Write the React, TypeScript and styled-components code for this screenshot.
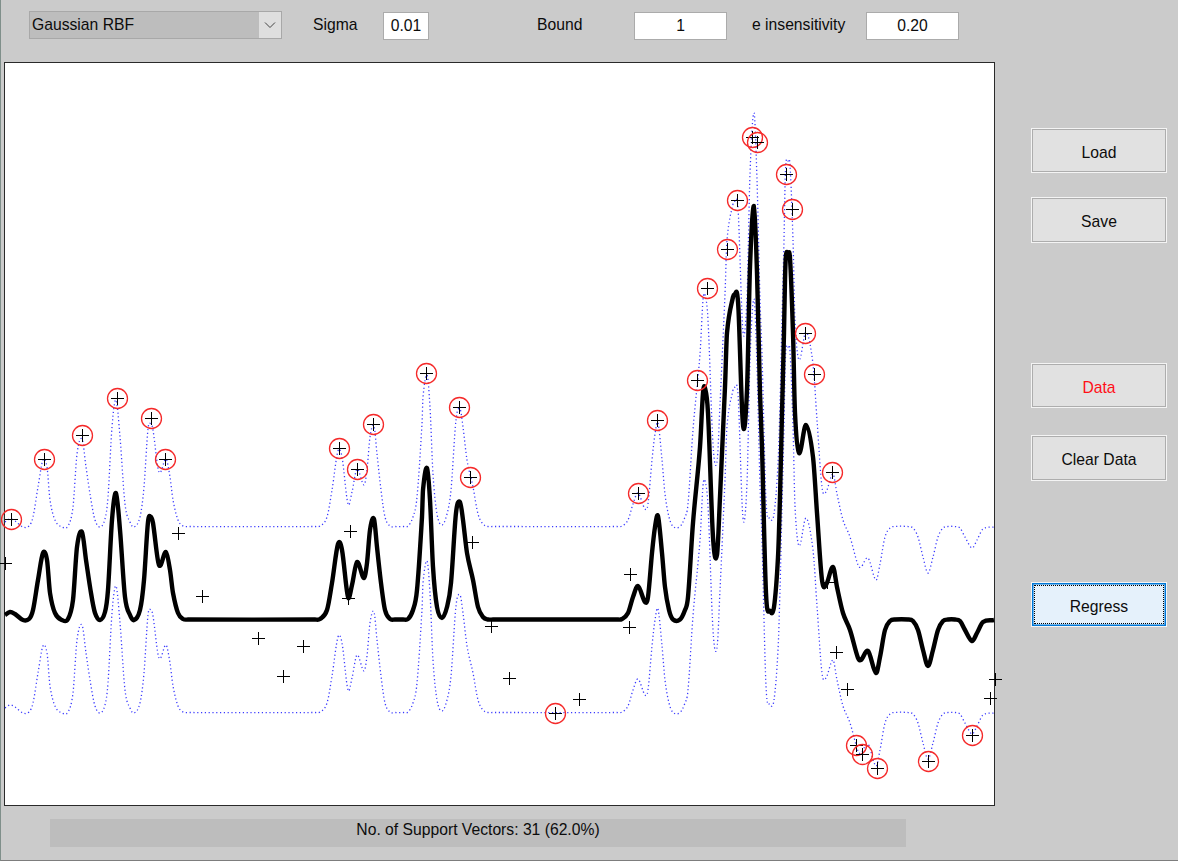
import React from 'react';

import styled, {createGlobalStyle} from 'styled-components';

const GlobalStyle = createGlobalStyle`
    html, body {
        margin: 0;
        padding: 0;
        background: #cbcbcb;
        overflow: hidden;
    }
`;

// all chart data is in page pixels, the svg viewBox below lines up with them
const CURVE: [number, number][] = [
    [5, 615], [10, 612], [15, 614], [23, 620], [29, 619], [33, 610], [38, 580], [43, 553], [47, 560], [50, 593],
    [55, 613], [62, 620], [68, 619], [73, 600], [77, 547], [82, 532], [86, 560], [91, 593], [95, 613], [100, 620],
    [105, 612], [108, 590], [112, 520], [116, 493], [120, 530], [125, 597], [130, 615], [134, 620], [140, 610],
    [144, 580], [148, 522], [151, 517], [153, 523], [159, 565], [166, 552], [170, 570], [173, 593], [178, 613],
    [183, 619], [188, 619.5], [315, 619.5], [320, 619], [327, 610], [332, 583], [338, 544], [342, 550], [348, 597],
    [352, 585], [357, 562], [364, 578], [367, 563], [370, 530], [374, 519], [377, 547], [381, 583], [385, 610],
    [390, 619], [395, 619.5], [403, 619.5], [408, 619], [413, 610], [417, 590], [422, 517], [423, 490], [427, 468],
    [430, 500], [433, 567], [437, 607], [442, 618], [447, 607], [451, 583], [456, 513], [460, 502], [463, 520],
    [467, 553], [473, 580], [478, 607], [483, 617], [488, 619.5], [493, 619.5], [617, 619.5], [622, 619], [628, 613],
    [633, 597], [638, 586], [645, 602], [648, 597], [652, 553], [655, 527], [658, 516], [662, 553], [665, 587],
    [669, 610], [673, 619.5], [680, 619.5], [685, 610], [688, 597], [693, 523], [700, 447], [703, 393], [705, 388],
    [708, 413], [713, 537], [717, 555], [720, 497], [725, 387], [727, 333], [733, 297], [735, 294], [737, 293],
    [738.5, 310], [743, 425], [747, 390], [750, 267], [754, 206], [757, 273], [760, 393], [762, 447], [766, 593],
    [770, 611], [774, 607], [778, 557], [780, 497], [782, 413], [784, 333], [785, 280], [786, 255], [788, 254],
    [790, 258], [793, 333], [795, 413], [799, 453], [806, 425], [813, 457], [817, 513], [822, 580], [826, 585],
    [833, 567], [837, 587], [843, 613], [850, 630], [858, 658], [861, 660], [868, 651], [876, 673], [880, 657],
    [885, 630], [890, 621], [895, 619.5], [908, 619.5], [913, 621], [918, 630], [923, 650], [928, 666], [933, 650],
    [938, 630], [943, 621], [948, 619.5], [955, 619.5], [960, 621], [965, 630], [972, 641], [977, 633], [983, 622],
    [994, 620],
];

const SUPPORT_VECTORS: [number, number][] = [
    [11, 519], [44, 459], [82, 435], [117, 398], [151, 418], [165, 459],
    [339, 448], [357, 469], [373, 424], [426, 373], [459, 407], [470, 477],
    [555, 713], [638, 493], [657, 420],
    [697, 380], [707, 288], [727, 249], [737, 200], [752, 137], [757, 142], [786, 174], [792, 209], [805, 333], [814, 374],
    [832, 472], [856, 745], [862, 754], [877, 768], [928, 761], [972, 735],
];

const OTHER_POINTS: [number, number][] = [
    [5, 563], [178, 533], [202, 596], [258, 638], [283, 676], [303, 646], [348, 598], [350, 531], [472, 542], [491, 626],
    [509, 678], [579, 699], [629, 627], [630, 574], [827, 582], [836, 652], [847, 689], [990, 698], [995, 679],
];

const TUBE = 93;

// hermite through the sampled points, slope from the neighbours so long flats don't bulge
const toPath = (pts: [number, number][], dy = 0) => {
    const slope = (i: number) => {
        const a = pts[Math.max(i - 1, 0)];
        const b = pts[Math.min(i + 1, pts.length - 1)];
        return (b[1] - a[1]) / (b[0] - a[0]);
    };
    let d = `M${pts[0][0]} ${pts[0][1] + dy}`;
    for (let i = 0; i < pts.length - 1; i++) {
        const p1 = pts[i];
        const p2 = pts[i + 1];
        const step = (p2[0] - p1[0]) / 3;
        const c1y = p1[1] + (slope(i) * step) + dy;
        const c2y = (p2[1] - (slope(i + 1) * step)) + dy;
        d += `C${(p1[0] + step).toFixed(1)} ${c1y.toFixed(1)} ${(p2[0] - step).toFixed(1)} ${c2y.toFixed(1)} ${p2[0]} ${p2[1] + dy}`;
    }
    return d;
};

const Window = styled.div`
    box-sizing: border-box;
    width: 1178px;
    height: 861px;
    background: #cbcbcb;
    border-left: 1px solid #7f8f8a;
    border-bottom: 1px solid #7d7d7d;
    font-family: "Liberation Sans", Arial, sans-serif;
    font-size: 15.7px;
    color: #0c0c0c;
    display: flex;
    flex-direction: column;
`;

const Toolbar = styled.div`
    height: 62px;
    box-sizing: border-box;
    padding: 11px 0 0 28px;
    display: flex;
    align-items: flex-start;
`;

const Select = styled.div`
    box-sizing: border-box;
    width: 253px;
    height: 28px;
    background: #bdbdbd;
    border: 1px solid #a8a8a8;
    display: flex;
    align-items: center;
    justify-content: space-between;
    padding-left: 2px;
`;

const SelectArrow = styled.div`
    width: 22px;
    height: 100%;
    background: #dfdfdf;
    display: flex;
    align-items: center;
    justify-content: center;
`;

const Label = styled.div<{$left: number; $width: number}>`
    margin-left: ${(p) => p.$left}px;
    width: ${(p) => p.$width}px;
    height: 27px;
    line-height: 27px;
    white-space: nowrap;
`;

const Field = styled.input<{$left: number; $width: number}>`
    box-sizing: border-box;
    margin: 1px 0 0 ${(p) => p.$left}px;
    padding: 0;
    width: ${(p) => p.$width}px;
    height: 28px;
    background: #fff;
    border: 1px solid #ababab;
    border-radius: 0;
    outline: none;
    font: inherit;
    color: #0c0c0c;
    text-align: center;
`;

const Main = styled.div`
    display: flex;
    align-items: flex-start;
`;

const Plot = styled.div`
    box-sizing: border-box;
    margin-left: 3px;
    width: 991px;
    height: 744px;
    background: #fff;
    border: 1px solid #2a2a2a;
    flex: none;
`;

const PlotSvg = styled.svg`
    display: block;
    width: 989px;
    height: 742px;
    overflow: visible;
`;

const SideColumn = styled.div`
    margin-left: 36px;
    display: flex;
    flex-direction: column;
`;

const Button = styled.div<{$top: number; $tall?: boolean; $red?: boolean; $focus?: boolean}>`
    box-sizing: border-box;
    position: relative;
    margin-top: ${(p) => p.$top}px;
    width: 136px;
    height: ${(p) => (p.$tall ? 46 : 45)}px;
    padding-top: ${(p) => (p.$tall ? 3 : 5)}px;
    border: 1px solid #f4f4f4;
    box-shadow: inset 0 0 0 ${(p) => (p.$focus ? '1.5px #0078d7' : '1px #adadad')};
    background: ${(p) => (p.$focus ? '#e5f1fb' : '#e1e1e1')};
    color: ${(p) => (p.$red ? '#ff0f17' : '#0c0c0c')};
    display: flex;
    align-items: center;
    justify-content: center;

    ${(p) => p.$focus && `
        &::after {
            content: '';
            position: absolute;
            inset: 2px;
            border: 1px dotted #000;
        }
    `}
`;

const Status = styled.div`
    box-sizing: border-box;
    margin: 13px 0 0 49px;
    width: 856px;
    height: 28px;
    background: #bdbdbd;
    text-align: center;
    line-height: 21px;
`;

const Plus = ({x, y}: {x: number; y: number}) => (
    <path
        d={`M${x - 6} ${y + 0.5}H${x + 7}M${x + 0.5} ${y - 6}V${y + 7}`}
        stroke='#000'
        strokeWidth={1}
        shapeRendering='crispEdges'
        fill='none'
    />
);

const App = () => {
    return (
        <Window>
            <GlobalStyle/>
            <Toolbar>
                <Select>
                    {'Gaussian RBF'}
                    <SelectArrow>
                        <svg
                            width='12'
                            height='8'
                            viewBox='0 0 12 8'
                        >
                            <path
                                d='M1 1.5L6 6.5L11 1.5'
                                fill='none'
                                stroke='#444'
                                strokeWidth='1'
                            />
                        </svg>
                    </SelectArrow>
                </Select>
                <Label
                    $left={31}
                    $width={70}
                >
                    {'Sigma'}
                </Label>
                <Field
                    $left={0}
                    $width={46}
                    value='0.01'
                    readOnly={true}
                />
                <Label
                    $left={108}
                    $width={97}
                >
                    {'Bound'}
                </Label>
                <Field
                    $left={0}
                    $width={93}
                    value='1'
                    readOnly={true}
                />
                <Label
                    $left={25}
                    $width={114}
                >
                    {'e insensitivity'}
                </Label>
                <Field
                    $left={0}
                    $width={93}
                    value='0.20'
                    readOnly={true}
                />
            </Toolbar>
            <Main>
                <Plot>
                    <PlotSvg viewBox='5 63 989 742'>
                        <path
                            d={toPath(CURVE, -TUBE)}
                            fill='none'
                            stroke='#3a3aff'
                            strokeWidth={1.3}
                            strokeDasharray='1.2 2.6'
                        />
                        <path
                            d={toPath(CURVE, TUBE)}
                            fill='none'
                            stroke='#3a3aff'
                            strokeWidth={1.3}
                            strokeDasharray='1.2 2.6'
                        />
                        {OTHER_POINTS.map(([x, y]) => (
                            <Plus
                                key={`${x}-${y}`}
                                x={x}
                                y={y}
                            />
                        ))}
                        <path
                            d={toPath(CURVE)}
                            fill='none'
                            stroke='#000'
                            strokeWidth={4.4}
                            strokeLinejoin='round'
                        />
                        {SUPPORT_VECTORS.map(([x, y]) => (
                            <g key={`${x}-${y}`}>
                                <Plus
                                    x={x}
                                    y={y}
                                />
                                <circle
                                    cx={x + 0.5}
                                    cy={y + 0.5}
                                    r={10}
                                    fill='none'
                                    stroke='#f52a2a'
                                    strokeWidth={1.3}
                                />
                            </g>
                        ))}
                    </PlotSvg>
                </Plot>
                <SideColumn>
                    <Button $top={66}>{'Load'}</Button>
                    <Button
                        $top={24}
                        $tall={true}
                    >
                        {'Save'}
                    </Button>
                    <Button
                        $top={120}
                        $red={true}
                    >
                        {'Data'}
                    </Button>
                    <Button
                        $top={27}
                        $tall={true}
                    >
                        {'Clear Data'}
                    </Button>
                    <Button
                        $top={101}
                        $focus={true}
                    >
                        {'Regress'}
                    </Button>
                </SideColumn>
            </Main>
            <Status>{'No. of Support Vectors: 31 (62.0%)'}</Status>
        </Window>
    );
};

export default App;
